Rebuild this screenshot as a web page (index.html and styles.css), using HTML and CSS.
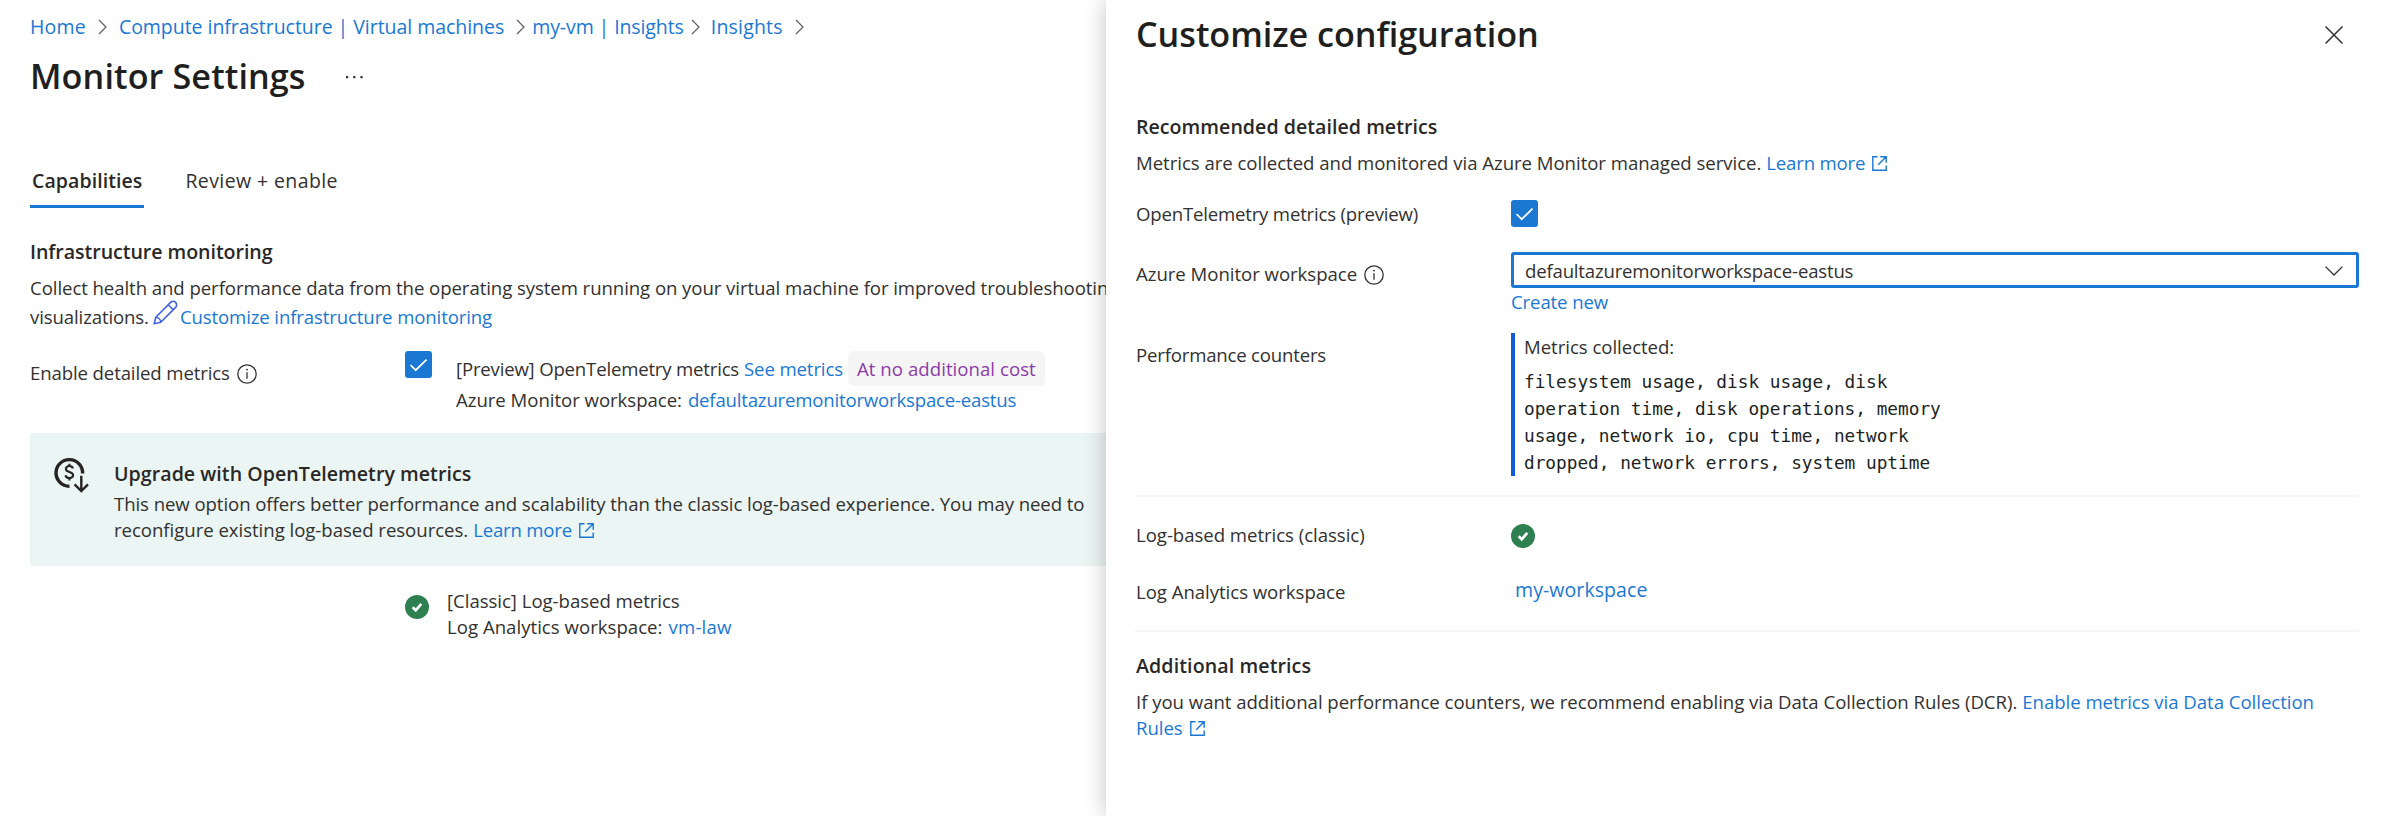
FILE: index.html
```
<!DOCTYPE html>
<html lang="en">
<head>
<meta charset="utf-8">
<title>Monitor Settings</title>
<link rel="stylesheet" href="styles.css">
</head>
<body>
<svg class="defs" aria-hidden="true">
  <symbol id="chev" viewBox="0 0 9 16"><path d="M1 1l7 7-7 7" fill="none" stroke="#605e5c" stroke-width="1.2"/></symbol>
  <symbol id="info" viewBox="0 0 20 20"><circle cx="10" cy="10" r="9.2" fill="none" stroke="#323130" stroke-width="1.3"/><path d="M10 8.2v6.6" stroke="#323130" stroke-width="1.3"/><circle cx="10" cy="5.6" r=".95" fill="#323130"/></symbol>
  <symbol id="ext" viewBox="0 0 15 15"><path d="M5.5.8H.8v13.4h13.4V9.5M8.3.8h5.9v5.9M14.2.8L6.2 8.8" fill="none" stroke="#1a78d3" stroke-width="1.4"/></symbol>
  <symbol id="ok" viewBox="0 0 24 24"><circle cx="12" cy="12" r="12" fill="#2f8050"/><path d="M7.7 12.3l3 3 5.6-6.4" fill="none" stroke="#fff" stroke-width="2.7"/></symbol>
  <symbol id="tick" viewBox="0 0 27 27"><path d="M5.5 14l5.2 5.2L21.5 8.6" fill="none" stroke="#fff" stroke-width="1.7"/></symbol>
</svg>
<div class="app">
  <main class="page">
    <nav class="crumbs">
      <a class="home">Home</a><svg><use href="#chev"/></svg>
      <a>Compute infrastructure | Virtual machines</a><svg><use href="#chev"/></svg>
      <a>my-vm | Insights</a><svg><use href="#chev"/></svg>
      <a class="wide">Insights</a><svg><use href="#chev"/></svg>
    </nav>
    <div class="titlebar">
      <h1>Monitor Settings</h1>
      <svg class="dots" viewBox="0 0 17 4"><path d="M0 1h2.200v2.200H0zM7.200 1h2.200v2.200H7.200zM14.400 1h2.200v2.200h-2.200z" fill="#323130"/></svg>
    </div>
    <div class="tabs">
      <span class="tab active">Capabilities</span>
      <span class="tab">Review + enable</span>
    </div>
    <h2>Infrastructure monitoring</h2>
    <div class="intro">
      <div class="line collect">Collect health and performance data from the operating system running on your virtual machine for improved troubleshooting and</div>
      <div class="line">
        <span class="snug">visualizations.</span>
        <svg class="pencil" viewBox="0 0 25 25"><path d="M1.200 23.800l1.600-6.600L17.600 2.400a3.500 3.500 0 0 1 5 5L7.800 22.200zM15.200 4.800l5 5M2.800 17.200c2.600 0 5 2.400 5 5" fill="none" stroke="#4262e0" stroke-width="1.6" stroke-linejoin="round"/></svg>
        <a class="snug">Customize infrastructure monitoring</a>
      </div>
    </div>
    <div class="enable">
      <div class="label"><span class="snug">Enable detailed metrics</span><svg class="info"><use href="#info"/></svg></div>
      <span class="check"><svg><use href="#tick"/></svg></span>
      <div class="detail">
        <div class="line first"><span class="tight">[Preview] OpenTelemetry metrics</span><a class="snug">See metrics</a><span class="badge">At no additional cost</span></div>
        <div class="line second"><span>Azure Monitor workspace:</span><a class="tight">defaultazuremonitorworkspace-eastus</a></div>
      </div>
    </div>
    <div class="banner">
      <svg class="cost" viewBox="0 0 36 36"><path d="M15.500 29.200A13.300 13.300 0 1 1 28.600 16.500" fill="none" stroke="#252423" stroke-width="3.400"/><path d="M18.900 11.500c-.4-1.700-1.800-2.500-3.500-2.500-2 0-3.500 1.100-3.500 2.900 0 4 7.200 2.100 7.200 6.200 0 1.900-1.600 3-3.700 3-2 0-3.500-1-3.900-2.900M15.400 6.800v2.200M15.400 21.200v2.400" fill="none" stroke="#252423" stroke-width="2.100"/><path d="M27.300 18.800v14.700M20.600 27.300l6.700 6.700 6.700-6.700" fill="none" stroke="#252423" stroke-width="2.400"/></svg>
      <div>
        <h2>Upgrade with OpenTelemetry metrics</h2>
        <div class="line offer">This new option offers better performance and scalability than the classic log-based experience. You may need to</div>
        <div class="line"><span>reconfigure existing log-based resources.</span><a class="tight learn">Learn more</a><svg class="ext"><use href="#ext"/></svg></div>
      </div>
    </div>
    <div class="classic">
      <svg class="ok"><use href="#ok"/></svg>
      <div>
        <div class="line"><span>[Classic] Log-based metrics</span></div>
        <div class="line"><span class="loose">Log Analytics workspace:</span><a class="law">vm-law</a></div>
      </div>
    </div>
  </main>

  <aside class="panel">
    <div class="panel-head">
      <h1>Customize configuration</h1>
      <svg class="close" viewBox="0 0 18 18"><path d="M.5.5l17 17M17.500.5l-17 17" fill="none" stroke="#323130" stroke-width="1.5"/></svg>
    </div>
    <h2>Recommended detailed metrics</h2>
    <div class="line lead"><span>Metrics are collected and monitored via Azure Monitor managed service.</span><a class="tight learn">Learn more</a><svg class="ext"><use href="#ext"/></svg></div>
    <div class="row otel">
      <span class="tight">OpenTelemetry metrics (preview)</span>
      <span class="check"><svg><use href="#tick"/></svg></span>
    </div>
    <div class="row workspace">
      <div class="label"><span>Azure Monitor workspace</span><svg class="info"><use href="#info"/></svg></div>
      <div>
        <div class="select"><span class="tight">defaultazuremonitorworkspace-eastus</span><svg viewBox="0 0 18 10"><path d="M.6.6L9 9 17.400.6" fill="none" stroke="#323130" stroke-width="1.3"/></svg></div>
        <a class="create snug">Create new</a>
      </div>
    </div>
    <div class="row counters">
      <div class="label"><span class="tight">Performance counters</span></div>
      <div class="collected">
        <div>Metrics collected:</div>
        <div class="mono">filesystem usage, disk usage, disk<br>operation time, disk operations, memory<br>usage, network io, cpu time, network<br>dropped, network errors, system uptime</div>
      </div>
    </div>
    <hr>
    <div class="row logs">
      <span>Log-based metrics (classic)</span>
      <svg class="ok"><use href="#ok"/></svg>
    </div>
    <div class="row analytics">
      <div class="label"><span>Log Analytics workspace</span></div>
      <a>my-workspace</a>
    </div>
    <hr class="last">
    <h2>Additional metrics</h2>
    <div class="line rules"><span>If you want additional performance counters, we recommend enabling via Data Collection Rules (DCR).</span><a>Enable metrics via Data Collection</a></div>
    <div class="line"><a>Rules</a><svg class="ext"><use href="#ext"/></svg></div>
  </aside>
</div>
</body>
</html>
```
FILE: styles.css
```
* { box-sizing: border-box; }

body {
  margin: 0;
  background: #fff;
  color: #323130;
  font: 18.6px/26px "Open Sans", "Noto Sans", sans-serif;
  letter-spacing: -0.035px;
}

.defs { position: absolute; width: 0; height: 0; }
svg { display: block; flex: none; }
a { color: #1a78d3; }

h1 {
  margin: 0;
  color: #201f1e;
  font-size: 34.2px;
  line-height: 48px;
  font-weight: 600;
  letter-spacing: -0.05px;
}

h2 {
  margin: 0;
  color: #292827;
  font-size: 19.6px;
  line-height: 26px;
  font-weight: 600;
  letter-spacing: 0.03px;
}

.tight { letter-spacing: -0.19px; }
.snug { letter-spacing: -0.12px; }
.loose { letter-spacing: 0.02px; }

.app {
  display: grid;
  grid-template-columns: 1106px 1fr;
  height: 816px;
  overflow: hidden;
}

.page {
  min-width: 0;
  overflow: hidden;
  padding: 14px 0 0 30px;
}

.line { display: flex; white-space: nowrap; }

.crumbs { display: flex; align-items: center; height: 26px; font-size: 19.5px; letter-spacing: -0.04px; }
.crumbs svg { width: 9px; height: 16px; margin: 0 12px; }
.crumbs a:nth-of-type(3) { margin-left: -5px; letter-spacing: -0.1px; }
.crumbs a:nth-of-type(3) + svg { margin-left: 7px; margin-right: 11px; }
.crumbs .home, .crumbs .wide { letter-spacing: 0.2px; }

.titlebar { display: flex; align-items: center; margin-top: 12px; }
.titlebar h1 { letter-spacing: 0.1px; }
.dots { width: 17px; height: 4px; margin: 2px 0 0 40px; }

.tabs { display: flex; gap: 41px; height: 40px; margin-top: 68px; font-size: 19.5px; }
.tab { letter-spacing: 0.4px; }
.active {
  padding: 0 2px;
  border-bottom: 3px solid #1a78d3;
  color: #292827;
  font-weight: 600;
  letter-spacing: 0.08px;
}

.page > h2 { margin-top: 31px; letter-spacing: -0.05px; }

.intro { margin-top: 8px; line-height: 29px; }
.collect { letter-spacing: -0.07px; }
.pencil { width: 25px; height: 25px; margin: -2px 2px 0 4px; }

.enable { display: grid; grid-template-columns: 375px 51px 1fr; margin-top: 20px; }
.label { display: flex; padding-top: 9px; }
.info { width: 20px; height: 20px; margin: 4px 0 0 7px; }
.check { width: 27px; height: 27px; border-radius: 3px; background: #1a78d3; }
.check svg { width: 27px; height: 27px; }
.first { line-height: 35px; }
.first a { margin-left: 5px; }
.badge {
  height: 35px;
  margin-left: 5px;
  padding: 0 9px;
  border-radius: 6px;
  background: #f5f5f5;
  color: #8b3ba8;
  letter-spacing: 0.05px;
}
.second { margin-top: 1px; }
.second a { margin-left: 6px; }

.banner {
  display: flex;
  height: 133px;
  margin-top: 20px;
  padding: 28px 0 0 25px;
  border-radius: 3px 0 0 3px;
  background: #ebf5f3;
}
.cost { width: 36px; height: 36px; margin: -4px 24px 0 -1px; }
.banner h2 { margin-bottom: 4px; letter-spacing: 0.04px; }
.offer { letter-spacing: -0.075px; }
.learn { margin-left: 5px; }
.ext { width: 15px; height: 15px; margin: 6px 0 0 7px; }

.classic { display: flex; gap: 18px; margin: 22px 0 0 375px; }
.ok { width: 24px; height: 24px; }
.classic .ok { margin-top: 7px; }
.law { margin-left: 6px; letter-spacing: 0.2px; }

.panel {
  z-index: 1;
  padding: 10px 27px 0 30px;
  background: #fff;
  box-shadow: 0 0 22px rgba(0, 0, 0, 0.24);
}

.panel-head { display: flex; justify-content: space-between; }
.close { width: 18px; height: 18px; margin: 16px 16px 0 0; }
.panel > h2 { margin-top: 56px; }
.lead { margin-top: 10px; }

.row { display: grid; grid-template-columns: 375px 1fr; }
.otel { align-items: center; height: 27px; margin-top: 24px; }
.otel > :first-child { padding-top: 1px; }
.workspace { height: 63px; margin-top: 25px; }
.select {
  display: flex;
  align-items: center;
  justify-content: space-between;
  height: 36px;
  padding: 1px 13px 0 11px;
  border: 3px solid #1a78d3;
  border-radius: 3px;
}
.select svg { width: 18px; height: 10px; }
.create { display: block; margin-top: 1px; }
.counters { height: 143px; margin-top: 18px; }
.collected { padding: 1px 0 0 9px; border-left: 4px solid #0f5bd8; }
.mono {
  height: 106px;
  margin-top: 9px;
  color: #201f1e;
  font: 17.75px/27px "DejaVu Sans Mono", "Liberation Mono", monospace;
  letter-spacing: 0;
  white-space: nowrap;
}

hr { height: 2px; margin: 19px -1px 0; margin-right: 0; border: 0; background: #f5f5f5; }
.logs { align-items: center; height: 24px; margin-top: 27px; }
.logs > span { margin-top: -2px; }
.analytics { height: 28px; margin-top: 29px; }
.analytics .label { padding-top: 2px; }
.analytics a { padding-left: 4px; font-size: 19.5px; letter-spacing: 0.08px; }
hr.last { margin-top: 25px; }
.panel > hr + h2 { margin-top: 21px; letter-spacing: 0.1px; }
.rules { margin-top: 10px; }
.rules a { margin-left: 5px; }
```
